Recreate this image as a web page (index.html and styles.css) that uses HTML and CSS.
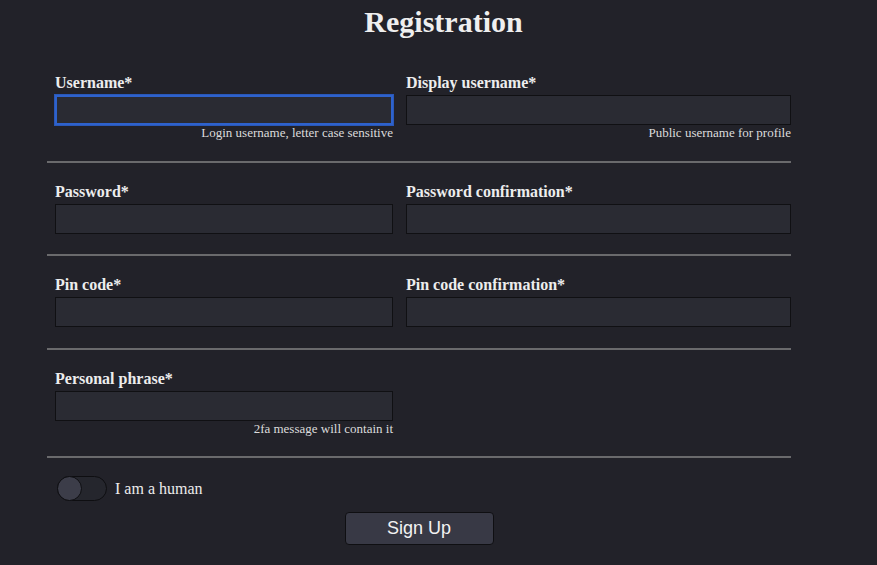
FILE: index.html
```html
<!DOCTYPE html>
<html lang="en">
<head>
<meta charset="utf-8">
<title>Registration</title>
<link rel="stylesheet" href="styles.css">
</head>
<body>
<main class="page">
  <h1 class="title">Registration</h1>
  <form class="form">
    <div class="row">
      <div class="field">
        <label class="label" for="username">Username*</label>
        <input class="input input-focus" id="username" type="text">
        <div class="hint">Login username, letter case sensitive</div>
      </div>
      <div class="field">
        <label class="label" for="display">Display username*</label>
        <input class="input" id="display" type="text">
        <div class="hint">Public username for profile</div>
      </div>
    </div>
    <hr class="divider">
    <div class="row">
      <div class="field">
        <label class="label" for="password">Password*</label>
        <input class="input" id="password" type="password">
      </div>
      <div class="field">
        <label class="label" for="password2">Password confirmation*</label>
        <input class="input" id="password2" type="password">
      </div>
    </div>
    <hr class="divider">
    <div class="row">
      <div class="field">
        <label class="label" for="pin">Pin code*</label>
        <input class="input" id="pin" type="password">
      </div>
      <div class="field">
        <label class="label" for="pin2">Pin code confirmation*</label>
        <input class="input" id="pin2" type="password">
      </div>
    </div>
    <hr class="divider">
    <div class="row">
      <div class="field">
        <label class="label" for="phrase">Personal phrase*</label>
        <input class="input" id="phrase" type="text">
        <div class="hint">2fa message will contain it</div>
      </div>
    </div>
    <hr class="divider">
    <div class="human">
      <span class="toggle"><span class="knob"></span></span>
      <span class="human-text">I am a human</span>
    </div>
    <div class="actions">
      <button class="btn" type="button">Sign Up</button>
    </div>
  </form>
</main>
</body>
</html>
```
FILE: styles.css
```css
html, body {
  margin: 0;
  padding: 0;
  background: #222229;
  height: 100%;
}
body {
  font-family: "Liberation Serif", "Times New Roman", serif;
  color: #ececec;
}
.page {
  width: 877px;
}
.title {
  margin: 0 0 15px;
  padding: 5px 0 0 10px;
  font-size: 30px;
  line-height: 34px;
  font-weight: bold;
  text-align: center;
  color: #efefef;
}
.form {
  margin-left: 47px;
  width: 744px;
}
.row {
  display: grid;
  grid-template-columns: 338px 385px;
  column-gap: 13px;
  padding: 20px 0 20.5px 8px;
}
.field {
  display: flex;
  flex-direction: column;
}
.label {
  font-size: 16px;
  line-height: 18px;
  font-weight: bold;
  margin-bottom: 3px;
  color: #ededed;
}
.input {
  box-sizing: border-box;
  height: 30px;
  margin: 0;
  background: #2a2b33;
  border: 1px solid #101013;
  border-radius: 0;
  padding: 0 6px;
  color: #eee;
  outline: none;
}
.input-focus {
  border: 2px solid #2e62cc;
  box-shadow: 0 0 0 1px #2a58b8;
}
.hint {
  font-size: 13px;
  line-height: 15px;
  text-align: right;
  color: #dcdcdc;
}
.divider {
  margin: 0;
  border: 0;
  height: 2px;
  background: #6a6a6c;
}
.human {
  display: flex;
  align-items: center;
  gap: 8px;
  padding: 18px 0 0 10px;
}
.toggle {
  box-sizing: border-box;
  width: 50px;
  height: 25px;
  border-radius: 13px;
  background: #25262d;
  border: 1px solid #0e0e11;
  display: flex;
  align-items: center;
}
.knob {
  box-sizing: border-box;
  width: 25px;
  height: 25px;
  margin-left: -1px;
  border-radius: 50%;
  background: #3c3d49;
  border: 1px solid #0e0e11;
}
.human-text {
  font-size: 16px;
  line-height: 18px;
  color: #ececec;
}
.actions {
  display: flex;
  justify-content: center;
  padding-top: 11px;
}
.btn {
  box-sizing: border-box;
  width: 149px;
  height: 33px;
  background: #383945;
  border: 1px solid #0f0f12;
  border-radius: 4px;
  color: #f2f2f2;
  font-family: "Liberation Sans", Arial, sans-serif;
  font-size: 18px;
  padding: 0;
}
```
